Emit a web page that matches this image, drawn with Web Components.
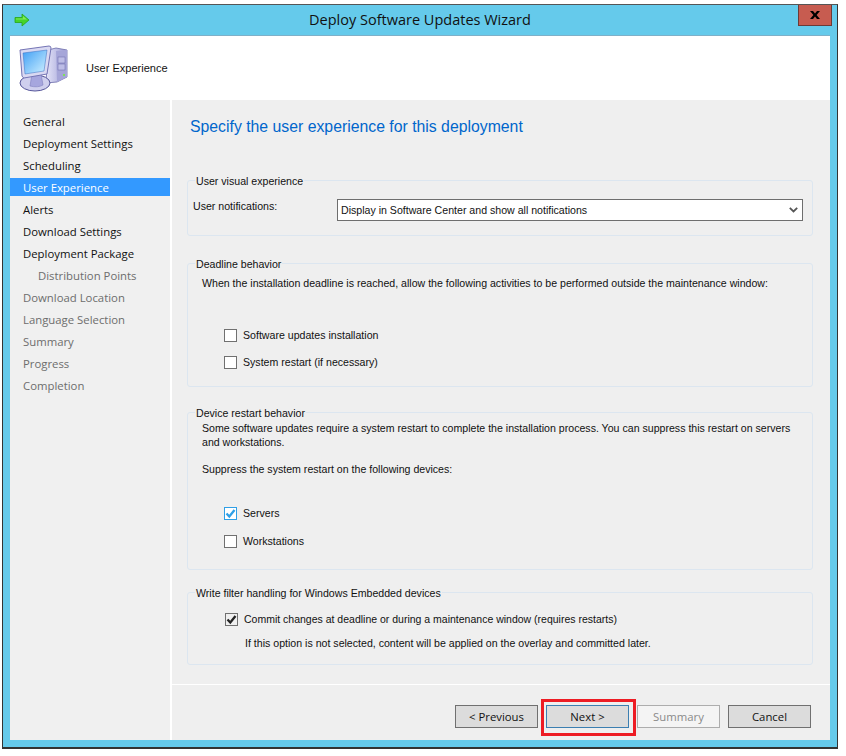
<!DOCTYPE html>
<html lang="en"><head><meta charset="utf-8"><title>Deploy Software Updates Wizard</title>
<style>
html,body{margin:0;padding:0;background:#fff;}
body{font:11.35px "Open Sans","Noto Sans",sans-serif;color:#111;width:846px;height:756px;overflow:hidden;}
</style></head><body>
<wizard-window>
  <wiz-title slot="title">Deploy Software Updates Wizard</wiz-title>
  <wiz-header slot="header">User Experience</wiz-header>
  <wiz-nav slot="nav">
    <nav-item>General</nav-item>
    <nav-item>Deployment Settings</nav-item>
    <nav-item>Scheduling</nav-item>
    <nav-item selected>User Experience</nav-item>
    <nav-item>Alerts</nav-item>
    <nav-item>Download Settings</nav-item>
    <nav-item>Deployment Package</nav-item>
    <nav-item disabled indent>Distribution Points</nav-item>
    <nav-item disabled>Download Location</nav-item>
    <nav-item disabled>Language Selection</nav-item>
    <nav-item disabled>Summary</nav-item>
    <nav-item disabled>Progress</nav-item>
    <nav-item disabled>Completion</nav-item>
  </wiz-nav>
  <wiz-page slot="page" heading="Specify the user experience for this deployment">
    <wiz-group legend="User visual experience" style="height:56px;margin-top:0">
      <wiz-field label="User notifications:" value="Display in Software Center and show all notifications"></wiz-field>
    </wiz-group>
    <wiz-group legend="Deadline behavior" style="height:124px;margin-top:27px">
      <wiz-text style="padding:12px 0 0 14px">When the installation deadline is reached, allow the following activities to be performed outside the maintenance window:</wiz-text>
      <wiz-check style="margin:38px 0 0 36px">Software updates installation</wiz-check>
      <wiz-check style="margin:13px 0 0 36px">System restart (if necessary)</wiz-check>
    </wiz-group>
    <wiz-group legend="Device restart behavior" style="height:158px;margin-top:25px">
      <wiz-text style="padding:8px 14px 0 14px">Some software updates require a system restart to complete the installation process. You can suppress this restart on servers and workstations.</wiz-text>
      <wiz-text style="padding:13px 0 0 14px">Suppress the system restart on the following devices:</wiz-text>
      <wiz-check state="blue" style="margin:30px 0 0 36px">Servers</wiz-check>
      <wiz-check style="margin:14px 0 0 36px">Workstations</wiz-check>
    </wiz-group>
    <wiz-group legend="Write filter handling for Windows Embedded devices" style="height:73px;margin-top:22px">
      <wiz-check state="dark" style="margin:19px 0 0 37px;font-size:10.5px">Commit changes at deadline or during a maintenance window (requires restarts)</wiz-check>
      <wiz-text style="padding:10px 0 0 57px">If this option is not selected, content will be applied on the overlay and committed later.</wiz-text>
    </wiz-group>
  </wiz-page>
  <wiz-footer slot="footer">
    <wiz-button>&lt; Previous</wiz-button>
    <wiz-button focused>Next &gt;</wiz-button>
    <wiz-button disabled>Summary</wiz-button>
    <wiz-button>Cancel</wiz-button>
  </wiz-footer>
</wizard-window>
<script>
const BODY='10.6px "Liberation Sans",Arial,sans-serif';
function def(name, css, html, extra){
  customElements.define(name, class extends HTMLElement{
    constructor(){super();const r=this.attachShadow({mode:'open'});
      r.innerHTML='<style>'+css+'</style>'+(typeof html==='function'?html(this):html);}
    connectedCallback(){ if(extra) extra(this,this.shadowRoot); }
  });
}
def('wizard-window',`
 :host{display:grid;box-sizing:border-box;margin:4px 0 0 2px;width:836px;height:745px;background:#65caeb;
   border:1px solid #333;border-bottom-width:2px;border-top-color:#555;
   grid-template-columns:160px 2px 658px;grid-template-rows:30px 65px 1fr;padding:0 7px 7px 7px;}
 .t{grid-column:1/4;}.h{grid-column:1/4;}
 .gap{background:#fff;}
 .right{display:flex;flex-direction:column;min-height:0;background:#efefef;}
`,`<div class="t"><slot name="title"></slot></div><div class="h"><slot name="header"></slot></div>
<slot name="nav"></slot><div class="gap"></div><div class="right"><slot name="page"></slot><slot name="footer"></slot></div>`);
def('wiz-title',`
 :host{display:flex;align-items:center;height:30px;position:relative;font-size:14.5px;color:#111;}
 .ic{margin-left:4px;width:16px;height:14px;display:block;flex:none}
 .txt{flex:1;text-align:center;padding-right:20px;margin-top:-1px}
 .x{position:absolute;right:-2px;top:0;width:32px;height:20px;background:#c75c50;border:1px solid #6d3a36;border-top:0;box-sizing:content-box;display:flex;align-items:center;justify-content:center;}
`,`<svg class="ic" viewBox="0 0 16 14"><path d="M1 4.5h7V1l7 6-7 6V9.5H1z" fill="#45d32a" stroke="#2aa516" stroke-width=".8"/><path d="M2 5.5h7V3l4 3.5H2z" fill="#7fea5c"/></svg><span class="txt"><slot></slot></span>
<div class="x"><svg width="10" height="8" viewBox="0 0 10 8"><path d="M0 0h3l2 2.4L7 0h3L6.6 4 10 8H7L5 5.6 3 8H0l3.4-4z" fill="#000"/></svg></div>`);
def('wiz-header',`
 :host{display:flex;align-items:center;height:65px;background:#fff;box-shadow:inset 0 1px 0 #7fb0c8;font:11.05px "Liberation Sans",Arial,sans-serif;}
 svg{margin-left:9px;width:50px;height:48px;flex:none;margin-top:1px}
 span{margin-left:17px;}
`,`<svg viewBox="0 0 50 48">
 <defs><linearGradient id="s" x1="0" y1="0" x2="1" y2="1"><stop offset="0" stop-color="#3f9ff5"/><stop offset="1" stop-color="#d2f2ff"/></linearGradient>
 <linearGradient id="c" x1="0" y1="0" x2="1" y2="0"><stop offset="0" stop-color="#e4e4f8"/><stop offset="1" stop-color="#9c9cd4"/></linearGradient></defs>
 <path d="M29 6l8-2 11 2v27l-10 5-11 1z" fill="url(#c)" stroke="#6a6aa8" stroke-width=".8"/>
 <path d="M37 7l11-1v27l-10 5z" fill="#a5a5d8"/>
 <rect x="39" y="13" width="7" height="6" fill="#bdbde6" stroke="#6a6aa8" stroke-width=".5"/><rect x="39" y="20" width="7" height="6" fill="#bdbde6" stroke="#6a6aa8" stroke-width=".5"/>
 <rect x="44" y="30" width="2" height="2" fill="#7fe05a"/>
 <ellipse cx="16" cy="39" rx="15" ry="8" fill="#cfcfee" stroke="#56569a"/>
 <path d="M13 30h9l2 11q-5 3-13 1z" fill="#a6a6de" stroke="#7f7fc0" stroke-width=".6"/>
 <path d="M1 6L30 2q2 0 2 2l-4 26-23 4q-1 0-2-2z" fill="#d9d9f2" stroke="#7575b5"/>
 <path d="M4 9l24-3-3 21-19 3z" fill="url(#s)" stroke="#3b6fc0" stroke-width=".5"/>
</svg><span><slot></slot></span>`);
def('wiz-nav',`:host{display:block;background:#f0f0f0;padding-top:12px;}`,`<slot></slot>`);
def('nav-item',`
 :host{display:flex;align-items:center;height:18px;margin-bottom:4px;padding-left:13px;color:#111;}
 :host([selected]){background:#3399ff;color:#fff;}
 :host([disabled]){color:#6d6d6d;}
 :host([indent]){padding-left:28px;}
`,`<slot></slot>`);
def('wiz-page',`
 :host{display:block;flex:1;padding:0 17px 0 15px;box-sizing:border-box;min-height:0;font:${BODY};}
 h1{margin:0;font:400 15.8px "Liberation Sans",Arial,sans-serif;color:#0066cc;padding:17px 0 0 3px;height:80px;box-sizing:border-box;line-height:20px}
`,`<h1></h1><slot></slot>`,(el,r)=>{r.querySelector('h1').textContent=el.getAttribute('heading');});
def('wiz-group',`
 :host{display:block;position:relative;box-sizing:border-box;border:1px solid #dce6f0;border-radius:3px;}
 .lg{position:absolute;left:7px;top:-7px;background:#efefef;padding:0 1px;line-height:14px;white-space:nowrap;}
`,`<span class="lg"></span><slot></slot>`,(el,r)=>{r.querySelector('.lg').textContent=el.getAttribute('legend');});
def('wiz-text',`:host{display:block;line-height:14px;}`,`<slot></slot>`);
def('wiz-field',`
 :host{display:flex;padding:0 9px 0 5px;box-sizing:border-box;}
 .l{width:144px;line-height:14px;margin-top:18px}
 .s{flex:1;height:22px;box-sizing:border-box;border:1px solid #6e6e6e;background:#fff;display:flex;align-items:center;justify-content:space-between;padding:0 4px 0 3px;margin-top:18px;}
`,`<span class="l"></span><div class="s"><span class="v"></span><svg width="9" height="6" viewBox="0 0 9 6"><path d="M.8.8L4.5 4.4 8.2.8" fill="none" stroke="#555" stroke-width="1.8"/></svg></div>`,
(el,r)=>{r.querySelector('.l').textContent=el.getAttribute('label');r.querySelector('.v').textContent=el.getAttribute('value');});
def('wiz-check',`
 :host{display:flex;align-items:center;gap:6px;height:14px;}
 .b{width:13px;height:13px;box-sizing:border-box;border:1px solid #707070;background:#fff;flex:none;display:flex;align-items:center;justify-content:center}
 :host([state=blue]) .b{border-color:#2f9fe6;}
 :host([state=dark]) .b{background:#efefef;}
 svg{display:none}
 :host([state]) svg{display:block}
 :host([state=blue]) path{stroke:#2f9fe6}
`,`<div class="b"><svg width="11" height="11" viewBox="0 0 11 11"><path d="M1.5 5.5L4.3 8.5 9.5 2" fill="none" stroke="#222" stroke-width="2.3"/></svg></div><span><slot></slot></span>`);
def('wiz-footer',`
 :host{display:flex;justify-content:flex-end;gap:8px;height:56px;box-sizing:border-box;border-top:1px solid #fff;padding:20px 19px 0 0;margin:0;position:relative;flex:none;}
 .mark{position:absolute;left:369px;top:14px;width:95px;height:37px;box-sizing:border-box;border:3px solid #ed1c24;pointer-events:none}
`,`<slot></slot><div class="mark"></div>`);
def('wiz-button',`
 :host{display:flex;align-items:center;justify-content:center;width:83px;height:23px;box-sizing:border-box;border:1px solid #707070;background:#dcdcdc;color:#111;}
 :host([focused]){border-color:#3c7fb1;}
 :host([disabled]){border-color:#adadad;background:#f4f4f4;color:#8a8a8a;}
`,`<slot></slot>`);
</script>
</body></html>
